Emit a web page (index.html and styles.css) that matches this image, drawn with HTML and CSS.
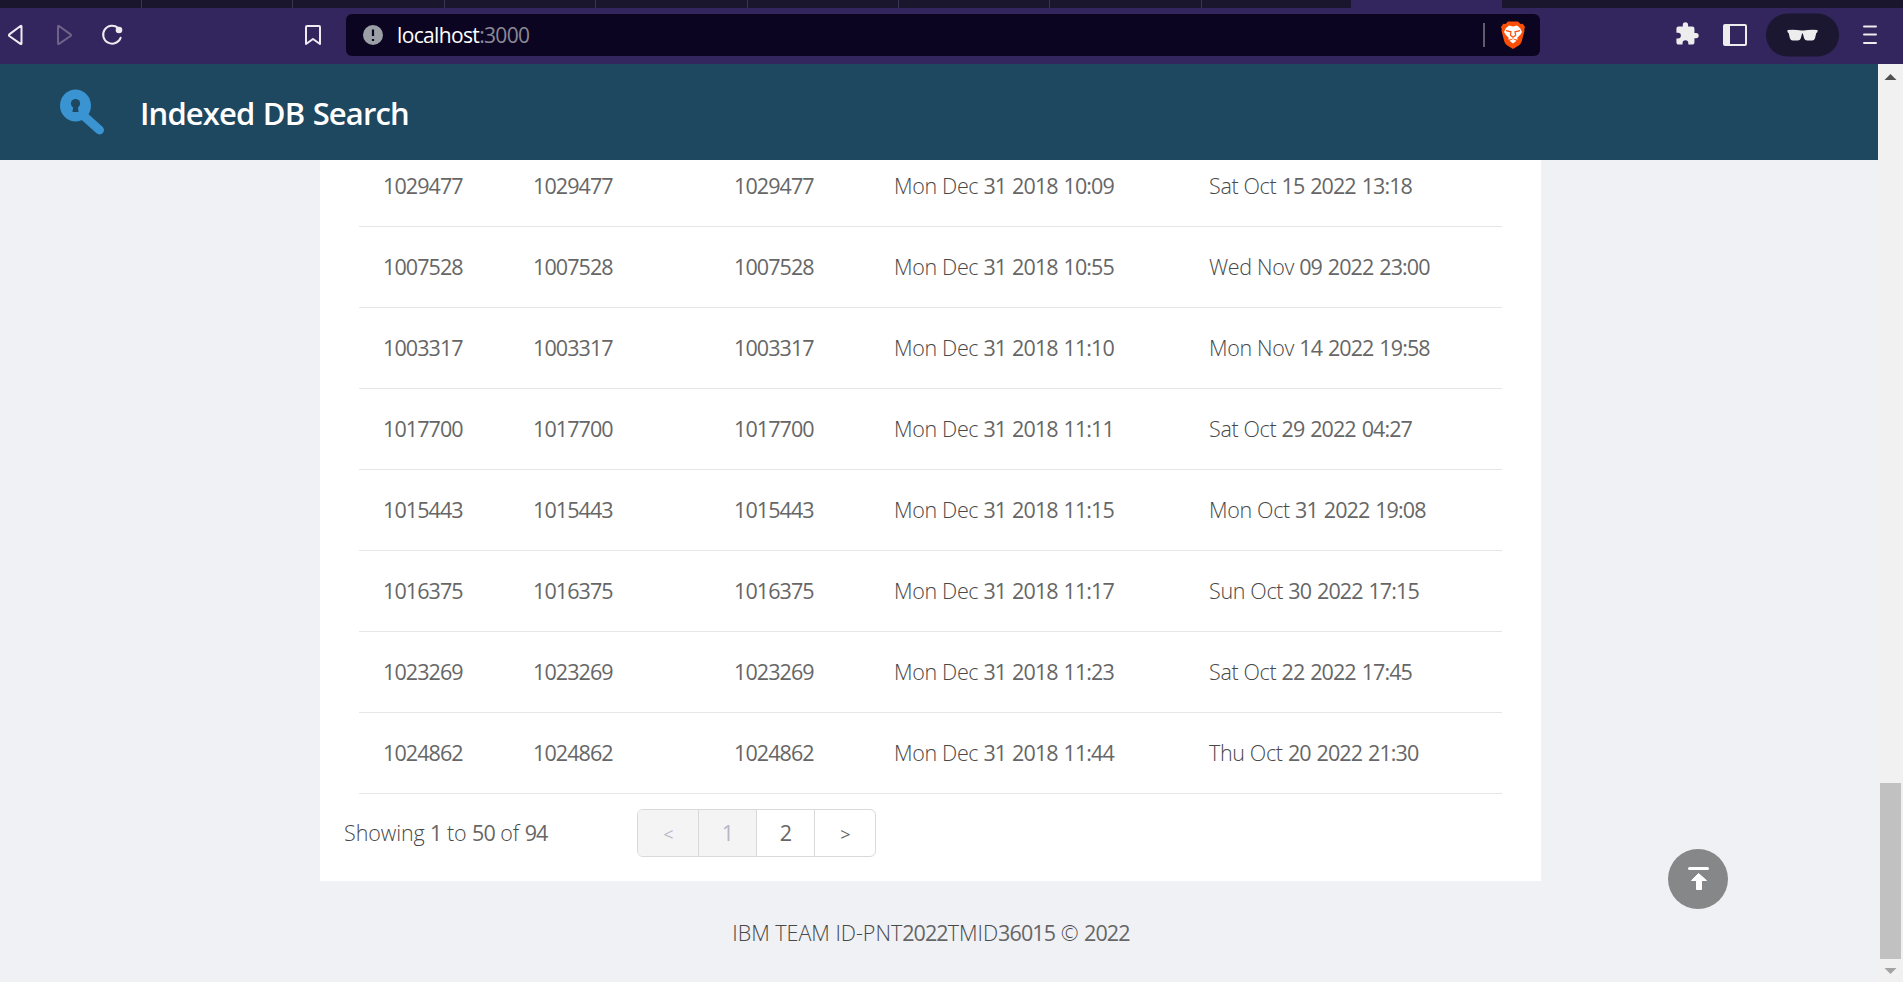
FILE: index.html
```html
<!DOCTYPE html>
<html lang="en">
<head>
<meta charset="utf-8">
<title>Indexed DB Search</title>
<link rel="stylesheet" href="styles.css">
</head>
<body>
<div class="tabs"><i class="tab first"></i><i class="tab"></i><i class="tab"></i><i class="tab"></i><i class="tab"></i><i class="tab"></i><i class="tab"></i><i class="tab"></i><i class="tab last"></i><i class="tab active"></i></div>
<div class="toolbar">
  <svg class="nav-icons" width="346" height="56" viewBox="0 8 346 56" fill="none" stroke="#eeecf2" stroke-width="2" stroke-linejoin="round" stroke-linecap="round">
    <path d="M21.500 26.500v17q0 1-1 .4L9.300 36q-.8-.8 0-1.600L20.500 26q1-.6 1 .5z"/>
    <path stroke="#6f6488" d="M58 26.500v17q0 1 1 .4L70.600 36q.8-.8 0-1.600L59 26q-1-.6-1 .5z"/>
    <path d="M118 27.800a9 9 0 1 0 2.600 10"/>
    <circle cx="119" cy="30" r="3.300" fill="#eeecf2" stroke="none"/>
    <path d="M306 27q0-1 1-1h12q1 0 1 1v17l-7-5-7 5z"/>
  </svg>
  <div class="address">
    <svg class="info" width="20" height="20" viewBox="0 0 20 20"><circle cx="10" cy="10" r="10" fill="#9aa0a6"/><path d="M10 4.500v6.500M10 14v2" stroke="#0b0522" stroke-width="2.200"/></svg>
    <span class="url">localhost<span class="port">:3000</span></span>
    <span class="sep"></span>
    <svg class="lion" width="24" height="28" viewBox="0 0 24 28"><path fill="#fb4f08" d="M7 .5h10l2.500 2.600 2.200-.4L24 6l-.8 2.200.3 1.500-2.800 10.800q-.8 2.500-3 4L12 28l-5.700-3.500q-2.200-1.500-3-4L.5 9.700l.3-1.500L0 6l2.300-3.300 2.200.4z"/><path fill="#fff" d="M8 4.600 12 5.500 16 4.600 19 7l2 4-1.500 2.500-3.200 3.300.4 2L12 17.500l-4.700 1.300.4-2-3.200-3.300L3 11l2-4z"/><path fill="none" stroke="#fb4f08" stroke-width="1.200" d="m5 9.600 5 1.200-.6 3.400 2.600 2 2.600-2-.6-3.400 5-1.200"/><path fill="#fff" d="m12 18 3.500 1.700L12 22.500l-3.500-2.800z"/></svg>
  </div>
  <svg class="tools" width="363" height="56" viewBox="1540 8 363 56">
    <path fill="#ededed" transform="translate(1674.300 21.300) scale(1.060)" d="M20.500 11H19V7c0-1.100-.9-2-2-2h-4V3.500a2.500 2.500 0 0 0-5 0V5H4c-1.100 0-2 .9-2 2v3.800h1.500a2.700 2.700 0 0 1 0 5.400H2V20c0 1.100.9 2 2 2h3.800v-1.500a2.700 2.700 0 0 1 5.400 0V22H17c1.100 0 2-.9 2-2v-4h1.500a2.500 2.500 0 0 0 0-5z"/>
    <rect x="1724" y="25" width="22" height="20" rx="1" fill="none" stroke="#ededed" stroke-width="2"/><path fill="#ededed" d="M1724 25h6v20h-6z"/>
    <rect x="1766" y="13.500" width="73" height="43" rx="21.500" fill="#1c1730"/>
    <path fill="#ededed" d="M1787.500 30q7-.8 14 .6h2q7-1.400 14-.6v2l-1.300 1.200-1.200 5q-.7 2.300-2.800 2.300h-5q-2.300 0-3-2l-1.300-4.700q-.4-1-.9 0l-1.300 4.700q-.7 2-3 2h-5q-2.100 0-2.800-2.300l-1.200-5-1.200-1.200z"/>
    <path stroke="#ededed" stroke-width="2" stroke-linecap="round" d="M1864 26.500h12M1864 34.500h12M1864 43h12"/>
  </svg>
</div>
<div class="viewport">
  <div class="page">
    <header>
      <svg width="44" height="46" viewBox="0 0 44 46"><path d="m25 28 14.500 13" stroke="#3a94d1" stroke-width="9" stroke-linecap="round"/><ellipse cx="15.500" cy="16.500" rx="15.500" ry="16" fill="#3a94d1"/><circle cx="15.500" cy="14.500" r="4.600" fill="#1e4760"/><path fill="#1e4760" d="M13.500 15h4l1 8h-6z"/></svg>
      <h1>Indexed DB Search</h1>
    </header>
    <main>
      <div class="table">
        <div class="row"><span>1029477</span><span>1029477</span><span>1029477</span><span><b>Mon Dec </b>31 2018 10:09</span><span><b>Sat Oct </b>15 2022 13:18</span></div>
        <div class="row"><span>1007528</span><span>1007528</span><span>1007528</span><span><b>Mon Dec </b>31 2018 10:55</span><span><b>Wed Nov </b>09 2022 23:00</span></div>
        <div class="row"><span>1003317</span><span>1003317</span><span>1003317</span><span><b>Mon Dec </b>31 2018 11:10</span><span><b>Mon Nov </b>14 2022 19:58</span></div>
        <div class="row"><span>1017700</span><span>1017700</span><span>1017700</span><span><b>Mon Dec </b>31 2018 11:11</span><span><b>Sat Oct </b>29 2022 04:27</span></div>
        <div class="row"><span>1015443</span><span>1015443</span><span>1015443</span><span><b>Mon Dec </b>31 2018 11:15</span><span><b>Mon Oct </b>31 2022 19:08</span></div>
        <div class="row"><span>1016375</span><span>1016375</span><span>1016375</span><span><b>Mon Dec </b>31 2018 11:17</span><span><b>Sun Oct </b>30 2022 17:15</span></div>
        <div class="row"><span>1023269</span><span>1023269</span><span>1023269</span><span><b>Mon Dec </b>31 2018 11:23</span><span><b>Sat Oct </b>22 2022 17:45</span></div>
        <div class="row"><span>1024862</span><span>1024862</span><span>1024862</span><span><b>Mon Dec </b>31 2018 11:44</span><span><b>Thu Oct </b>20 2022 21:30</span></div>
      </div>
      <div class="pager">
        <span class="summary"><b>Showing </b>1<b> to </b>50<b> of </b>94</span>
        <div class="pages"><span class="off arrow">&lt;</span><span class="off">1</span><span>2</span><span class="arrow">&gt;</span></div>
      </div>
    </main>
    <footer><b>IBM TEAM ID-PNT</b>2022<b>TMID</b>36015<b> © </b>2022</footer>
    <div class="to-top"><svg width="60" height="60" viewBox="0 0 60 60"><path fill="#fff" stroke="#fff" stroke-linejoin="round" d="m30.500 24.500 8 7h-5v9h-5v-9h-5z"/><path stroke="#fff" stroke-width="3" stroke-linecap="round" d="M21.500 19.500h18"/></svg></div>
  </div>
  <div class="scrollbar">
    <svg width="25" height="24"><path fill="#505050" d="m12.500 10 6 6h-12z"/></svg>
    <div class="thumb"></div>
    <svg width="25" height="23"><path fill="#a3a3a3" d="M6.500 9h12l-6 6z"/></svg>
  </div>
</div>
</body>
</html>
```
FILE: styles.css
```css
* { box-sizing: border-box; }
body { margin: 0; width: 1903px; height: 982px; overflow: hidden; font: 400 21.500px/30px "Open Sans", "Noto Sans", sans-serif; letter-spacing: -.9px; word-spacing: 1.200px; color: #666; background: #f0f1f5; }
b { font-weight: 300; letter-spacing: -.35px; word-spacing: 0; color: #484848; }
.tabs { height: 8px; display: flex; background: #19162d; }
.tab { width: 151.400px; border-right: 1px solid #3b3352; }
.tab.first { width: 142px; }
.tab.last { width: 149.200px; border: 0; }
.tab.active { border: 0; background: #33255e; }
.toolbar { height: 56px; display: flex; background: #33255e; }
.address { width: 1194px; height: 42px; margin-top: 6px; border-radius: 6px; background: #0b0522; display: flex; align-items: center; padding: 0 15px 0 17px; }
.url { color: #fff; margin-left: 14px; flex: 1; font-size: 21px; letter-spacing: -.65px; }
.port { color: #8b8995; }
.sep { width: 2px; height: 24px; background: #605c6c; margin-right: 16px; }
.viewport { height: 918px; display: flex; }
.page { width: 1878px; }
header { height: 96px; background: #1e4760; display: flex; align-items: center; padding-left: 60px; }
h1 { margin: 2px 0 0 36px; font-size: 31px; font-weight: 600; color: #fff; letter-spacing: -.87px; }
main { width: 1221px; height: 721px; margin-left: 320px; background: #fff; padding: 0 39px; }
.table { height: 634px; }
.row { height: 81px; display: grid; grid-template-columns: 150px 201px 160px 315px 1fr; padding-left: 24px; align-items: center; border-bottom: 1px solid #e6e6e6; }
.row:first-child { height: 67px; padding-bottom: 14px; }
.pager { height: 87px; margin-left: -15px; display: flex; align-items: flex-start; padding-top: 15px; }
.summary { width: 293px; padding-top: 9px; }
.summary b { letter-spacing: -.1px; }
.pages { display: flex; height: 48px; border: 1px solid #d9d9d9; border-radius: 6px; overflow: hidden; line-height: 46px; text-align: center; }
.pages span { width: 58px; border-right: 1px solid #d9d9d9; }
.pages .arrow { width: 61px; font-size: 18px; line-height: 48px; }
.pages span:last-child { border: 0; width: 60px; }
.pages .off { background: #f4f4f4; color: #b9b6c8; }
footer { text-align: center; width: 1222px; margin: 37px 0 0 320px; }
footer b { letter-spacing: -.02px; }
.to-top { position: fixed; left: 1668px; top: 849px; width: 60px; height: 60px; border-radius: 50%; background: #868788; }
.scrollbar { width: 25px; background: #f1f1f1; display: flex; flex-direction: column; justify-content: space-between; }
.thumb { width: 21px; height: 176px; margin: auto 0 0 2px; background: #c1c1c1; }
svg { display: block; flex: none; }
```
